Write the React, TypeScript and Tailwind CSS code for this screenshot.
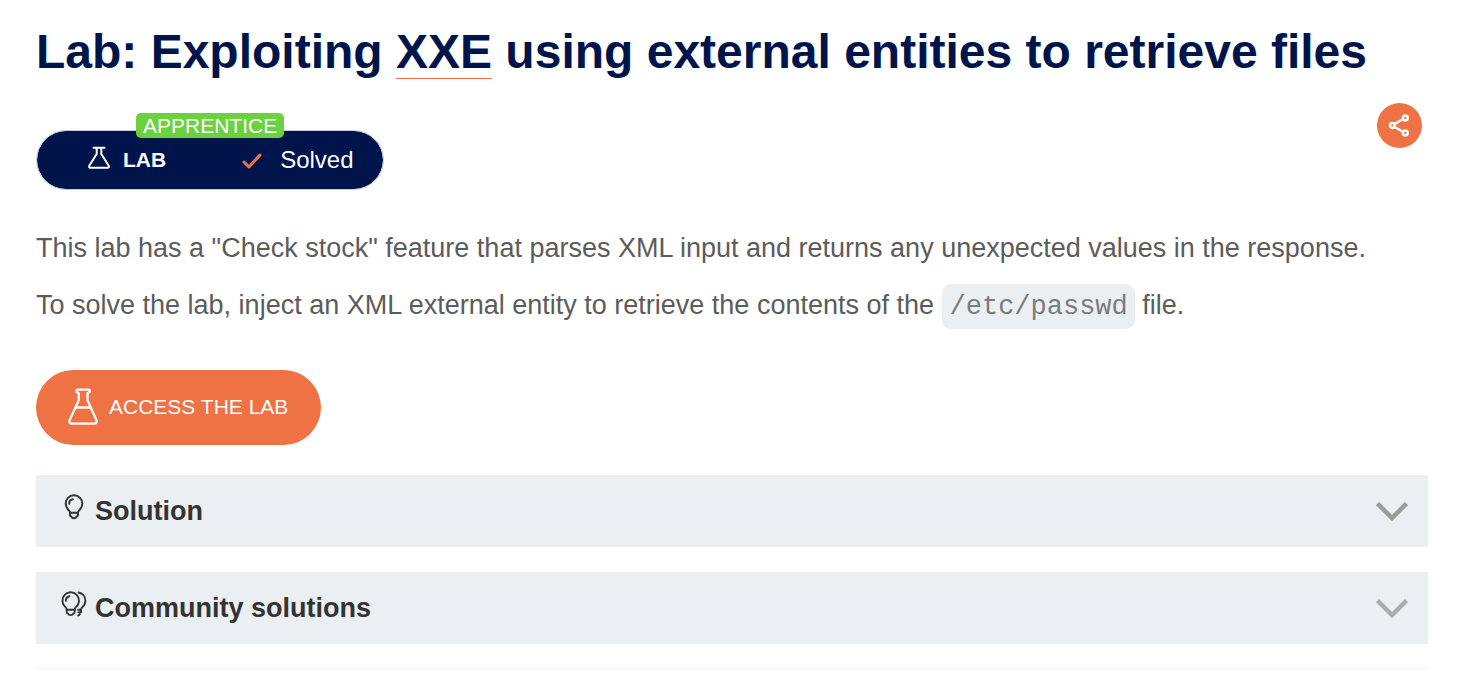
import React from "react";

function FlaskSmall() {
  return (
    <svg width="24" height="24" viewBox="0 0 24 24" fill="none" stroke="white" strokeWidth="2" strokeLinecap="round" strokeLinejoin="round" aria-hidden="true">
      <path d="M6.500 1.700h11M9.700 2v6L2.400 19.500c-.7 1.200-.3 2.200 1 2.200h17.200c1.300 0 1.700-1 1-2.200L14.300 8V2" />
    </svg>
  );
}

function FlaskLarge() {
  return (
    <svg width="30" height="38" viewBox="0 0 30 38" fill="none" stroke="white" strokeWidth="2.300" strokeLinecap="round" strokeLinejoin="round" aria-hidden="true">
      <path d="M9.500 1.700h11.200c1.600 0 1.600 2.300 0 2.800l-1.200.7v7l8.900 19.800c.8 2-.2 3.600-2.100 3.600H3.800c-1.900 0-2.900-1.600-2.100-3.600l9-19.800v-7l-1.200-.7c-1.600-.5-1.600-2.800 0-2.800z" />
      <path d="M7.700 19.500h14.800" />
    </svg>
  );
}

function Bulb() {
  return (
    <svg width="20" height="26" viewBox="0 0 20 26" fill="none" stroke="#333332" strokeWidth="2" strokeLinecap="round" strokeLinejoin="round" aria-hidden="true">
      <path d="M6 18.800c0-1.400-.4-2-1.400-2.900A8.300 8.300 0 1 1 15.400 15.900c-1 .9-1.400 1.500-1.400 2.900z" />
      <path d="M6 18.800v2.200c0 1.200.8 1.400 1.500 1.700.5 1.900 4.500 1.900 5 0 .7-.3 1.500-.5 1.500-1.700v-2.200M5.200 9.700c0-2.300 1.500-4 3.600-4.400" />
    </svg>
  );
}

function Bulbs() {
  return (
    <svg width="28" height="26" viewBox="0 0 28 26" fill="none" stroke="#333332" strokeWidth="1.900" strokeLinecap="round" strokeLinejoin="round" aria-hidden="true">
      <path d="M6.700 18.800c0-1.400-.4-2-1.400-2.900A8.300 8.300 0 1 1 16.100 15.900c-1 .9-1.400 1.500-1.400 2.900z" />
      <path d="M6.700 18.800v2.200c0 1.200.8 1.400 1.500 1.700.5 1.900 4.500 1.900 5 0 .7-.3 1.500-.5 1.500-1.700v-2.200M5.900 9.700c0-2.300 1.500-4 3.600-4.400" />
      <path d="M18.500 1.500c4.100.8 6.900 4 6.900 8 0 2.600-1.100 4.900-2.900 6.400-1.100.9-1.500 1.500-1.500 2.900h-2.800M21 18.800v2.500h-2.600M18.200 24.500c.8 0 1.500-.5 1.600-1.300" />
    </svg>
  );
}

function Panel({ icon, title, chevron }: { icon: React.ReactNode; title: string; chevron: string }) {
  return (
    <button type="button" className="flex h-[72px] w-full items-center bg-[#ebeff2] pr-5 pl-6 text-left">
      <span className="mb-2 flex w-7 justify-center">{icon}</span>
      <span className="ml-[7px] text-[27px] leading-9 font-bold text-[#333332]">{title}</span>
      <svg className="mt-0.5 ml-auto" width="32" height="20" viewBox="0 0 32 20" fill="none" stroke={chevron} strokeWidth="4.500" aria-hidden="true">
        <path d="M1.500 1.600 16 16.100 30.500 1.600" />
      </svg>
    </button>
  );
}

export default function App() {
  return (
    <main className="min-h-screen bg-white pt-6 pr-[46px] pl-9 font-['Liberation_Sans',Arial,sans-serif] text-[#5c5c5b]">
      <h1 className="text-[48px] leading-[56px] font-bold text-[#00144c]">
        Lab: Exploiting{" "}
        <a href="#xxe" className="border-b border-b-[#ee7243]">XXE</a> using external entities to retrieve files
      </h1>

      <div className="mt-[23px] flex items-start justify-between pr-[6px]">
        <div className="relative mt-[27px] flex h-[60px] w-[348px] items-center rounded-full border border-[#c9ccd6] bg-[#00144c] bg-clip-padding pl-[50px] text-white">
          <span className="absolute -top-[18px] left-[99px] rounded-[5px] bg-[#6bd13f] px-[7px] text-[21px] leading-[25px]">APPRENTICE</span>
          <span className="mb-1"><FlaskSmall /></span>
          <strong className="ml-3 text-[21px] leading-6">LAB</strong>
          <svg className="ml-[75px]" width="22" height="18" viewBox="0 0 22 18" fill="none" stroke="#ee7243" strokeWidth="3" strokeLinecap="round" strokeLinejoin="round" aria-hidden="true">
            <path d="M3 11l5 5L19 4" />
          </svg>
          <span className="ml-[17px] text-[24px] leading-7">Solved</span>
        </div>
        <button type="button" aria-label="Share" className="flex size-[45px] items-center justify-center rounded-full bg-[#ee7243]">
          <svg width="23" height="23" viewBox="0 0 23 23" fill="none" stroke="white" strokeWidth="2.500" aria-hidden="true">
            <path d="M6.200 10.200 15.500 5M6.200 12.800l9.300 5.200" />
            <circle cx="4.300" cy="11.500" r="2.400" fill="#ee7243" />
            <circle cx="17.300" cy="4" r="2.400" fill="#ee7243" />
            <circle cx="17.300" cy="19" r="2.400" fill="#ee7243" />
          </svg>
        </button>
      </div>

      <p className="mt-10 text-[27px] leading-9">
        This lab has a "Check stock" feature that parses XML input and returns any unexpected values in the response.
      </p>
      <p className="mt-[21px] text-[27px] leading-9">
        To solve the lab, inject an XML external entity to retrieve the contents of the{" "}
        <code className="rounded-[9px] bg-[#ebeff2] pt-2 pr-[7px] pb-[7px] pl-2 font-['Liberation_Mono','Courier_New',monospace] text-[27px] text-[#7a7b7b]">/etc/passwd</code> file.
      </p>

      <a href="#access" className="mt-[45px] flex h-[75px] w-fit items-center rounded-full bg-[#ee7243] pr-[33px] pb-0.5 pl-8 text-[21px] leading-6 text-white">
        <FlaskLarge />
        <span className="ml-[11px]">ACCESS THE LAB</span>
      </a>

      <div className="mt-[30px] flex flex-col gap-[25px]">
        <Panel icon={<Bulb />} title="Solution" chevron="#9b9b98" />
        <Panel icon={<Bulbs />} title="Community solutions" chevron="#adadac" />
      </div>
      <hr className="mt-6 border-[#f2f3f4]" />
    </main>
  );
}
